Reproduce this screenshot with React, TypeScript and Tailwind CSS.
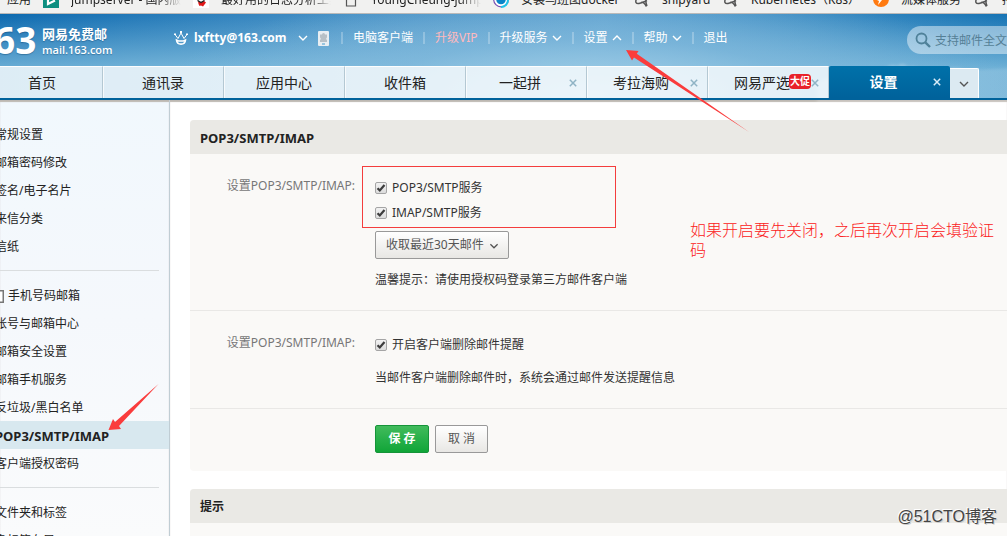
import { ReactNode } from "react";

const SANS = "font-['Noto_Sans','Noto_Sans_CJK_SC',sans-serif]";

function Chevron({ up = false, className = "" }: { up?: boolean; className?: string }) {
  return (
    <svg viewBox="0 0 10 10" className={`h-2.5 w-2.5 shrink-0 ${className}`} fill="none" stroke="currentColor" strokeWidth="1.4">
      <path d={up ? "M1 7 5 3l4 4" : "M1 3l4 4 4-4"} />
    </svg>
  );
}

function CloseIcon({ className = "" }: { className?: string }) {
  return (
    <svg viewBox="0 0 8 8" className={`h-2 w-2 ${className}`} fill="none" stroke="currentColor" strokeWidth="1.5">
      <path d="M.8.8l6.4 6.4M7.200 .8.8 7.200" />
    </svg>
  );
}

function TealIcon() {
  return (
    <svg viewBox="0 0 16 16" className="h-4 w-4">
      <rect width="16" height="16" fill="#0d8f80" />
      <path d="M5 4v8l7-3.500" fill="none" stroke="#fff" strokeWidth="2.200" />
    </svg>
  );
}

function RedMark() {
  return (
    <svg viewBox="0 0 16 16" className="h-4 w-4">
      <rect width="16" height="16" fill="#fff" />
      <path d="M5 9l3 1.500L11 9l2 1.500L10 14.500l-2-1-1.500.5L5.500 12z" fill="#e01818" />
      <path d="M4.500 8.500l3.500 2 3.500-2" fill="none" stroke="#222" strokeWidth="1.400" />
    </svg>
  );
}

function PageIcon() {
  return (
    <svg viewBox="0 0 16 16" className="h-4 w-4" fill="none" stroke="#555" strokeWidth="1.200">
      <path d="M3.500 1h6l3 3v10h-9z" />
    </svg>
  );
}

function SwirlIcon() {
  return (
    <svg viewBox="0 0 16 16" className="h-4 w-4">
      <circle cx="8" cy="7.500" r="7.300" fill="#fff" stroke="#7a4fb0" strokeWidth="1.200" />
      <path d="M15 8a7 7 0 0 1-7 7" fill="none" stroke="#20c4e8" strokeWidth="2" />
      <circle cx="8" cy="7.500" r="4.800" fill="#0a84c8" />
    </svg>
  );
}

function ScribbleIcon() {
  return (
    <svg viewBox="0 0 16 16" className="h-4 w-4" fill="none" stroke="#555" strokeWidth="1.500">
      <path d="M2.500 7C1 10 2 12 5 11.500c3-.5 5-1.500 8-3M7.500 10c2 0 3.500 2 5 4.500M12 5c-.5 4 0 7 1 9" />
    </svg>
  );
}

function OrangeIcon() {
  return (
    <svg viewBox="0 0 16 16" className="h-4 w-4">
      <circle cx="8" cy="7" r="8" fill="#ff7a10" />
      <path d="M13 3L5 13l1-4-2-1z" fill="#fff" />
    </svg>
  );
}

const bookmarks: { icon: ReactNode; text: string; width: string; fade?: boolean }[] = [
  { icon: <TealIcon />, text: "jumpserver - 国内版本", width: "w-[150px]", fade: true },
  { icon: <RedMark />, text: "最好用的日志分析工具", width: "w-[150px]", fade: true },
  { icon: <PageIcon />, text: "YoungCheung-jump", width: "w-[150px]", fade: true },
  { icon: <SwirlIcon />, text: "安装乌班图docker", width: "w-[141px]" },
  { icon: <ScribbleIcon />, text: "shipyard", width: "w-[89px]" },
  { icon: <ScribbleIcon />, text: "Kubernetes（K8s）", width: "w-[150px]" },
  { icon: <OrangeIcon />, text: "流媒体服务", width: "w-[101px]" },
  { icon: <ScribbleIcon />, text: "持续集成", width: "w-[100px]" },
];

function BookmarkBar() {
  return (
    <nav className="h-3.5 shrink-0 overflow-hidden border-b border-[#b9b9b9] bg-[#f1f1f0] text-xs text-[#222]">
      <div className="-mt-2 flex h-4 pl-[7px] leading-4 whitespace-nowrap">
        <a href="#apps" className="w-9 shrink-0">应用</a>
        {bookmarks.map((b) => (
          <a key={b.text} href="#bookmark" className={`flex shrink-0 ${b.width}`}>
            <span className="mr-3 shrink-0">{b.icon}</span>
            <span className={`overflow-hidden ${b.fade ? "mr-3 [mask-image:linear-gradient(to_right,#000_80%,transparent)]" : ""}`}>{b.text}</span>
          </a>
        ))}
      </div>
    </nav>
  );
}

const headerLinks: { text: string; arrow?: "up" | "down"; vip?: boolean }[] = [
  { text: "电脑客户端" },
  { text: "升级VIP", vip: true },
  { text: "升级服务", arrow: "down" },
  { text: "设置", arrow: "up" },
  { text: "帮助", arrow: "down" },
  { text: "退出" },
];

function Header() {
  return (
    <header className="relative flex h-[52px] shrink-0 items-center overflow-hidden">
      <a href="#home" className="-ml-1.5 flex w-[124px] shrink-0 items-center text-white [text-shadow:0_1px_1px_rgba(0,50,90,0.35)]">
        <span className="w-[44px] text-[37px] leading-[44px] font-bold">63</span>
        <span className="ml-1 flex flex-col pt-1">
          <span className="text-[13px] leading-[15px] font-bold">网易免费邮</span>
          <span className="font-['Open_Sans',sans-serif] text-[11px] leading-4 font-semibold">mail.163.com</span>
        </span>
      </a>
      <div className="-mt-1 ml-14 flex shrink-0 items-center text-xs leading-4 text-white">
        <svg viewBox="0 0 14 16" className="mr-1.5 h-4 w-3.5" fill="none" stroke="#fff">
          <path d="M1 4.500l3 4 3-5.500 3 5.500 3-4" strokeWidth="1" />
          <path d="M2.500 10c.5 5.500 8.500 5.500 9 0l-2 1h-5z" strokeWidth="1.600" />
          <path d="M0 3.500h2v1.500H0zM6 1h2v2H6zM12 3.500h2v1.500h-2z" fill="#fff" stroke="none" />
        </svg>
        <a href="#account" className="w-24 font-bold">lxftty@163.com</a>
        <Chevron className="ml-2" />
        <svg viewBox="0 0 11 15" className="ml-2.5 h-[15px] w-[11px]">
          <rect width="11" height="15" rx="1" fill="#e9eef2" />
          <path d="M2 3.500h2a1.500 1.500 0 0 1 3 0h2v3a1.400 1.400 0 0 0 0 2.500v2H2V9a1.400 1.400 0 0 0 0-2.500z" fill="#b8c0c6" />
          <rect x="4" y="12.500" width="3" height="1" fill="#4a9bcb" />
        </svg>
        <nav className="ml-3 flex items-center">
          {headerLinks.map((l) => (
            <div key={l.text} className="flex items-center border-l-2 border-white/25 px-[10px] leading-3">
              <a href="#menu" className={`flex items-center ${l.vip ? "text-[#ffb9bd]" : ""}`}>
                {l.text}
                {l.arrow && <Chevron up={l.arrow === "up"} className="ml-1" />}
              </a>
            </div>
          ))}
        </nav>
      </div>
      <label className="-mr-10 ml-auto flex h-7 w-[140px] shrink-0 items-center gap-1 rounded-full bg-white/45 pl-2">
        <svg viewBox="0 0 16 16" className="h-4 w-4 shrink-0" fill="none" stroke="#4f8199" strokeWidth="1.800">
          <circle cx="6.500" cy="6.500" r="5" />
          <path d="M10.300 10.300 15 15" strokeWidth="2.400" />
        </svg>
        <input type="search" aria-label="搜索" placeholder="支持邮件全文搜索" className="w-full bg-transparent pt-0.5 text-xs outline-none placeholder:text-[#557f96]" />
      </label>
    </header>
  );
}

function Clouds() {
  return (
    <svg viewBox="0 0 220 60" className="pointer-events-none absolute top-9 right-0 h-[60px] w-[220px]">
      <defs>
        <filter id="soft" x="-10%" y="-30%" width="120%" height="160%">
          <feGaussianBlur stdDeviation="1.6" />
        </filter>
      </defs>
      <g fill="#fff" filter="url(#soft)">
        <path opacity=".16" d="M30 34q8-8 16-5 5-6 12-4 7-5 13 0 9-2 14 3 9-5 18-1 10-5 20 2l30-8q14-7 26-1l70-3v60H30z" />
        <path opacity=".22" d="M96 20q8-7 14-4 6-5 11 1 8-2 14 4l-18 2z" />
      </g>
    </svg>
  );
}

const tabs: { text: string; closable?: boolean; badge?: string; active?: boolean }[] = [
  { text: "首页" },
  { text: "通讯录" },
  { text: "应用中心" },
  { text: "收件箱" },
  { text: "一起拼", closable: true },
  { text: "考拉海购", closable: true },
  { text: "网易严选", closable: true, badge: "大促" },
  { text: "设置", closable: true, active: true },
];

function TabBar() {
  return (
    <nav className="relative flex h-[34px] shrink-0 overflow-hidden border-b-2 border-[#00629b] pr-4">
      <div className="-ml-[18px] flex text-sm text-[#222]">
        {tabs.map((t) => (
          <div
            key={t.text}
            className={`relative flex w-[121px] shrink-0 items-center justify-center ${
              t.active
                ? "rounded-t-xs bg-linear-to-b from-[#0071a9] to-[#00629b] font-bold text-white"
                : "border-t border-r border-t-white/90 border-r-[#b4c8d3] bg-white/78 shadow-[inset_1px_0_0_rgba(255,255,255,0.7)]"
            }`}
          >
            <a href="#tab" className={t.closable ? "pr-3" : ""}>{t.text}</a>
            {t.badge && (
              <span className="absolute top-[7px] right-[17px] rounded-sm bg-[#e8222a] px-px text-[10px] leading-[15px] font-bold text-white">{t.badge}</span>
            )}
            {t.closable && (
              <button type="button" aria-label="关闭" className={`absolute right-[9px] ${t.active ? "text-[#d8ecf8]" : "text-[#8fb3c5]"}`}>
                <CloseIcon className="block" />
              </button>
            )}
          </div>
        ))}
        <button type="button" aria-label="更多" className="mt-0.5 flex w-[29px] shrink-0 items-center justify-center rounded-tr-xs border-t border-r border-white bg-[#dceaf2] text-[#555]">
          <Chevron />
        </button>
      </div>
    </nav>
  );
}

const menuGroups = [
  ["常规设置", "邮箱密码修改", "签名/电子名片", "来信分类", "信纸"],
  ["手机号码邮箱", "帐号与邮箱中心", "邮箱安全设置", "邮箱手机服务", "反垃圾/黑白名单", "POP3/SMTP/IMAP", "客户端授权密码"],
  ["文件夹和标签", "多标签布局"],
];

function Sidebar() {
  return (
    <aside className="w-[170px] shrink-0 overflow-hidden border-r border-[#c0cdd4] bg-linear-to-b from-[#f1f8fd] via-[#f5f8fc] to-[#fafbfc] pt-5 text-xs shadow-[inset_0_2px_1px_#bdb8b2]">
      {menuGroups.map((group, i) => (
        <ul key={group[0]} className={i > 0 ? "mt-2.5 border-t border-[#dadddf] pt-2.5 [border-image:linear-gradient(to_right,#dadddf_158px,transparent_158px)_1]" : ""}>
          {group.map((item) => {
            const active = item === "POP3/SMTP/IMAP";
            return (
              <li key={item} className={`h-7 pt-px leading-7 whitespace-nowrap ${active ? "bg-[#d8e8ef] text-[13px] font-bold" : ""}`}>
                <a href="#settings" className="-ml-[5px] flex items-center text-[#222]">
                  {item === "手机号码邮箱" && (
                    <svg viewBox="0 0 9 13" className="mr-1 h-[13px] w-[9px]" fill="#fff" stroke="#777" strokeWidth="1.500">
                      <rect x=".75" y=".75" width="7.500" height="11.500" />
                    </svg>
                  )}
                  {item}
                </a>
              </li>
            );
          })}
        </ul>
      ))}
    </aside>
  );
}

function CheckField({ label }: { label: string }) {
  return (
    <label className="flex h-[25px] items-center">
      <span className="relative mr-[5px] h-3 w-3">
        <input type="checkbox" defaultChecked className="peer block h-3 w-3 appearance-none rounded-xs border border-[#a5a5a5] bg-linear-to-b from-[#f2f2f2] to-[#dcdcdc]" />
        <svg viewBox="0 0 12 12" className="pointer-events-none absolute inset-0 hidden peer-checked:block" fill="none" stroke="#3d3d3d" strokeWidth="2.200">
          <path d="M2.500 6.200 4.800 8.500 9.500 3" />
        </svg>
      </span>
      {label}
    </label>
  );
}

function SettingRow({ children }: { children: ReactNode }) {
  return (
    <div className="flex border-b border-[#e9e8e6] pt-[21px] pb-5">
      <span className="w-[165px] shrink-0 text-right leading-[22px] text-[#777]">设置POP3/SMTP/IMAP:</span>
      <div className="ml-5 flex flex-col items-start">{children}</div>
    </div>
  );
}

function SettingsPanel() {
  return (
    <section className="overflow-hidden rounded-l-sm bg-[#faf9f7] text-xs text-[#333]">
      <h2 className="h-[34px] bg-[#eae9e5] pt-px pl-2.5 text-[13px] leading-[34px] font-bold text-[#222]">POP3/SMTP/IMAP</h2>
      <form onSubmit={(e) => e.preventDefault()}>
        <SettingRow>
          <div className="relative">
            <div className="pointer-events-none absolute -top-[9px] -left-[13px] h-[62px] w-[254px] border border-[#f43d3d]" />
            <CheckField label="POP3/SMTP服务" />
            <CheckField label="IMAP/SMTP服务" />
          </div>
          <div className="relative mt-1.5 text-[#555]">
            <select aria-label="收取范围" className="block h-7 w-[134px] appearance-none rounded-xs border border-[#999] bg-linear-to-b from-white to-[#e8e7e4] pl-2.5">
              <option>收取最近30天邮件</option>
              <option>收取全部邮件</option>
            </select>
            <Chevron className="pointer-events-none absolute top-[10px] right-2.5 scale-90" />
          </div>
          <p className="mt-[11px] leading-5">温馨提示：请使用授权码登录第三方邮件客户端</p>
        </SettingRow>
        <SettingRow>
          <CheckField label="开启客户端删除邮件提醒" />
          <p className="mt-[11px] leading-5">当邮件客户端删除邮件时，系统会通过邮件发送提醒信息</p>
        </SettingRow>
        <div className="flex gap-1.5 pt-4 pb-[18px] pl-[185px] text-xs">
          <button type="submit" className="h-7 w-[54px] rounded-xs border border-[#159439] bg-linear-to-b from-[#41bb5c] via-[#27b04a] to-[#0fa537] font-bold text-white">保 存</button>
          <button type="button" className="h-7 w-[53px] rounded-xs border border-[#999] bg-linear-to-b from-white to-[#e8e7e4] text-[#555]">取 消</button>
        </div>
      </form>
    </section>
  );
}

function Annotations() {
  return (
    <>
      <svg className="pointer-events-none absolute top-0 left-0 h-[536px] w-[800px]" viewBox="0 0 800 536" fill="#fa3c3c">
        <path d="M626 50l12.500 1-1.700 2.700L749 132 634 57.500l-2 3z" />
        <path d="M108.500 430l4.500-11 2 3L158.500 384l-39.500 42 2 3z" />
      </svg>
      <p className="pointer-events-none absolute top-[220px] left-[690px] w-[306px] text-base leading-5 font-light text-[#fa2020]">
        如果开启要先关闭，之后再次开启会填验证码
      </p>
      <p className="pointer-events-none absolute right-2.5 bottom-[7px] font-['Liberation_Sans','Noto_Sans_CJK_SC',sans-serif] text-base leading-6 text-[#444] [text-shadow:-1px_-1px_0_#fff,1px_1px_0_#ccc]">
        @51CTO博客
      </p>
    </>
  );
}

export default function App() {
  return (
    <div className={`relative flex h-screen flex-col overflow-hidden bg-white ${SANS}`}>
      <BookmarkBar />
      <div className="relative shrink-0 bg-[radial-gradient(ellipse_430px_110px_at_590px_80px,#a4d0e8_0%,rgba(130,185,220,0.6)_50%,transparent_100%),linear-gradient(to_bottom,transparent,rgba(150,205,230,0.65)_52px),linear-gradient(to_right,#0c69af,#4690c5_35%,#5b9fce_60%,#3b8bc2_80%,#1673b4)]">
        <Clouds />
        <Header />
        <TabBar />
      </div>
      <div className="flex min-h-0 flex-1">
        <Sidebar />
        <main className="min-w-0 flex-1 overflow-hidden pt-5 pl-5 shadow-[inset_0_2px_1px_#bdb8b2]">
          <SettingsPanel />
          <section className="mt-[18px] h-40 overflow-hidden rounded-l-sm bg-[#faf9f7] text-xs text-[#222]">
            <h2 className="h-[34px] bg-[#eae9e5] pt-px pl-2.5 leading-[34px] font-bold">提示</h2>
          </section>
        </main>
      </div>
      <Annotations />
    </div>
  );
}
